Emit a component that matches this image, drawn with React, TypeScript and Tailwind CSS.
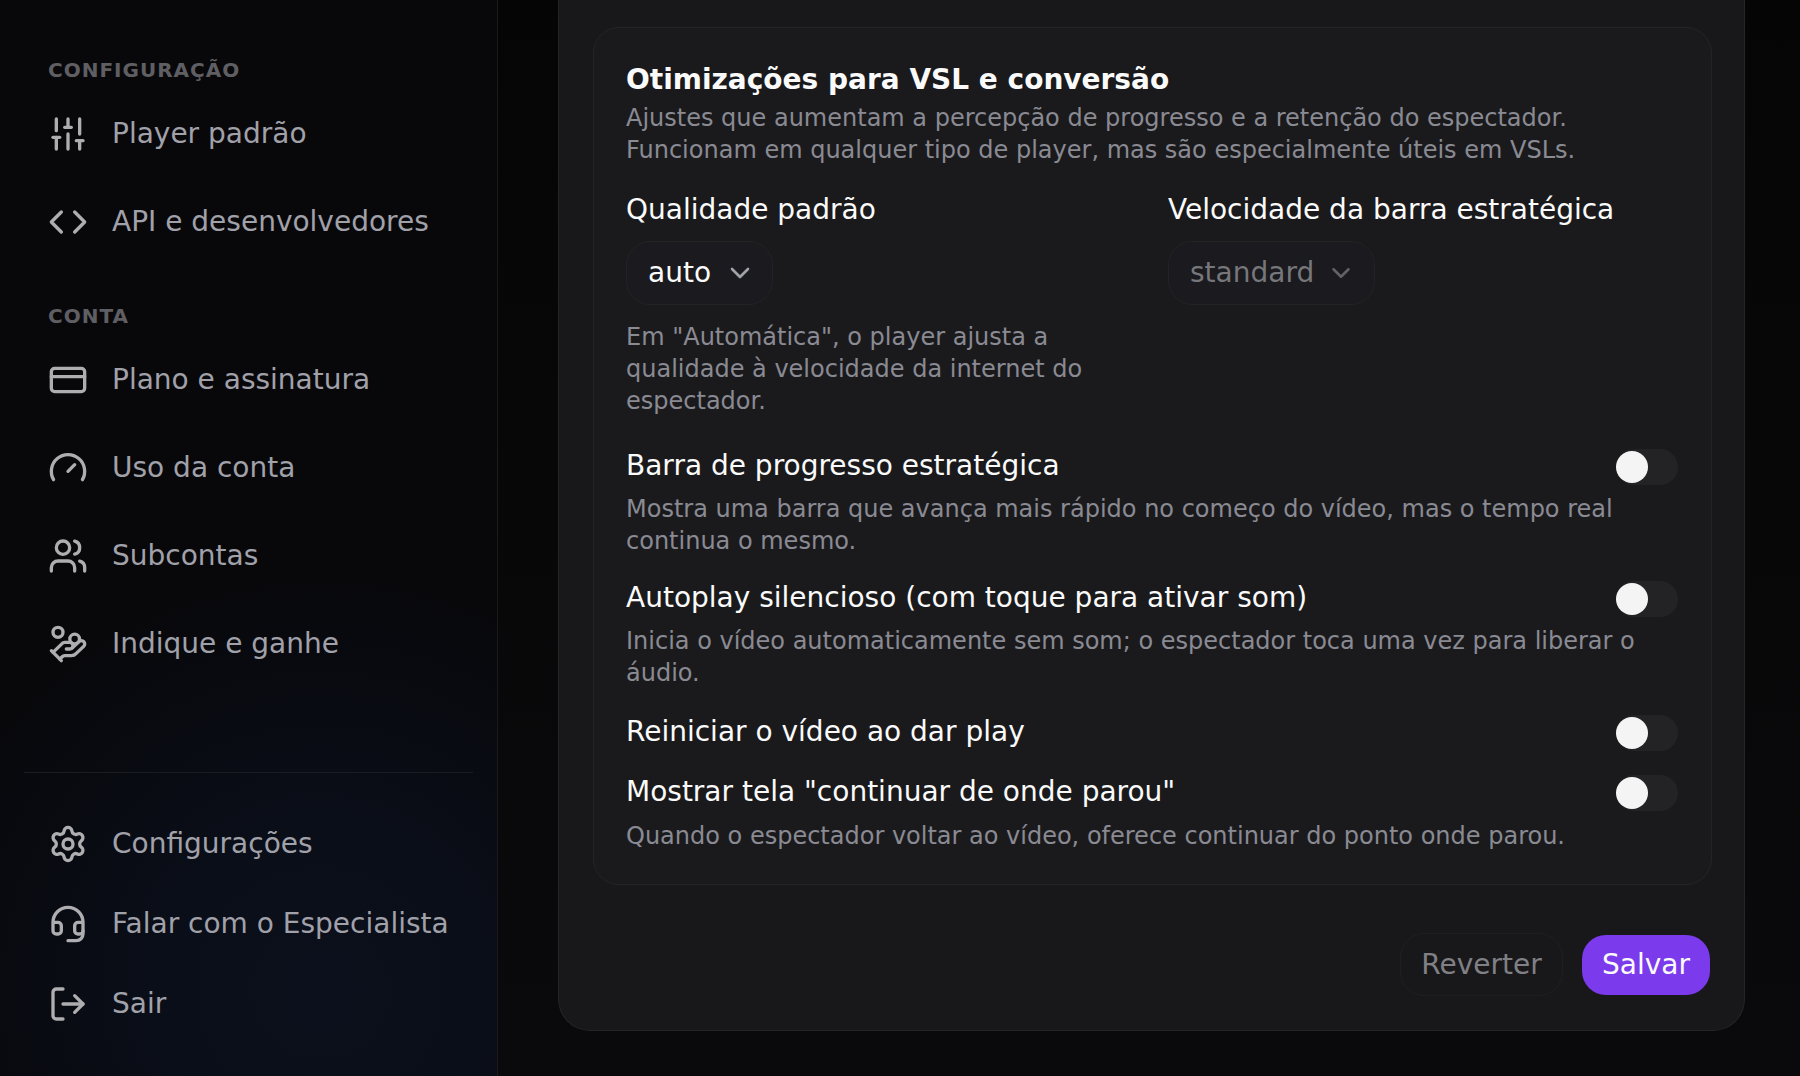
import React from 'react';
import { ChevronDown, Code, CreditCard, Gauge, HandCoins, Headset, LogOut, Settings, SlidersVertical, Users } from 'lucide-react';

const NavItem: React.FC<{ icon: React.ElementType; label: string; tall?: boolean }> = ({ icon: Icon, label, tall }) => (
  <div className={`flex items-center gap-[24px] text-[28px] text-[#a1a1aa] ${tall ? 'h-[88px]' : 'h-[80px]'}`}>
    <Icon className="size-[40px] shrink-0 text-[#aeaeb0]" />
    <span>{label}</span>
  </div>
);

const Toggle = () => (
  <div className="mt-[2px] flex h-[36px] w-[62px] shrink-0 items-center rounded-full bg-[#232325]">
    <div className="size-[32px] rounded-full bg-[#f4f4f5]" />
  </div>
);

const ToggleRow: React.FC<{ label: string; className: string }> = ({ label, className }) => (
  <div className={`flex h-[36px] items-center justify-between text-[28px] leading-[36px] text-[#fafafa] ${className}`}>
    <span>{label}</span>
    <Toggle />
  </div>
);

const Select: React.FC<{ value: string; disabled?: boolean }> = ({ value, disabled }) => (
  <div className={`flex h-[64px] w-fit items-center rounded-[24px] border border-[#232326] bg-[#1a1a1f] pl-[21px] text-[28px] ${disabled ? 'gap-[12px] pr-[18px] text-[#77777b]' : 'gap-[13px] pr-[16px] text-[#fafafa]'}`}>
    <span>{value}</span>
    <ChevronDown className={disabled ? 'size-[30px] text-[#636366]' : 'size-[32px] text-[#a1a1aa]'} />
  </div>
);

export default function App() {
  return (
    <div className="flex h-[1076px] overflow-hidden bg-[#070709] font-['DejaVu_Sans']">
      <aside className="flex h-full w-[498px] shrink-0 flex-col border-r border-[#1a1a1c] bg-[#08080b] bg-[radial-gradient(circle_at_320px_990px,#0b101c_0px,#0a0e18_170px,#090b12_280px,#08080b_420px)]">
        <div className="pl-[48px] pt-[59px]">
          <div className="-mt-[1px] h-[24px] text-[20px] font-bold leading-[24px] tracking-[1px] text-[#5f5f63]">CONFIGURAÇÃO</div>
          <div className="mt-[8px]">
            <NavItem icon={SlidersVertical} label="Player padrão" tall />
            <NavItem icon={Code} label="API e desenvolvedores" tall />
          </div>
          <div className="mt-[38px] h-[24px] text-[20px] font-bold leading-[24px] tracking-[1px] text-[#5f5f63]">CONTA</div>
          <div className="mt-[8px]">
            <NavItem icon={CreditCard} label="Plano e assinatura" tall />
            <NavItem icon={Gauge} label="Uso da conta" tall />
            <NavItem icon={Users} label="Subcontas" tall />
            <NavItem icon={HandCoins} label="Indique e ganhe" tall />
          </div>
        </div>
        <div className="mx-[24px] mt-auto mb-[32px] border-t border-[#1a1c22] pt-[31px] pl-[24px]">
          <NavItem icon={Settings} label="Configurações" />
          <NavItem icon={Headset} label="Falar com o Especialista" />
          <NavItem icon={LogOut} label="Sair" />
        </div>
      </aside>

      <main className="flex-1 bg-[linear-gradient(180deg,#050505,#0a0a0c)] pb-[45px] pl-[60px] pr-[55px]">
        <div className="flex h-full flex-col rounded-b-[32px] border border-t-0 border-[#252527] bg-[#18181b] pl-[34px] pr-[32px] pt-[27px]">
          <section className="rounded-[26px] border border-[#242427] bg-[#1a1a1d] pb-[32px] pl-[32px] pr-[33px] pt-[32px]">
            <h2 className="text-[28px] font-bold leading-[40px] text-[#fafafa]">Otimizações para VSL e conversão</h2>
            <p className="mt-[2px] text-[24px] leading-[32px] text-[#8a8a93]">
              Ajustes que aumentam a percepção de progresso e a retenção do espectador.
              <br />
              Funcionam em qualquer tipo de player, mas são especialmente úteis em VSLs.
            </p>
            <div className="mt-[26px] grid grid-cols-2 gap-x-[32px]">
              <div>
                <label className="block text-[28px] leading-[36px] text-[#fafafa]">Qualidade padrão</label>
                <div className="mt-[13px]">
                  <Select value="auto" />
                </div>
                <p className="mt-[16px] text-[24px] leading-[32px] text-[#8a8a93]">
                  Em "Automática", o player ajusta a qualidade à velocidade da internet do espectador.
                </p>
              </div>
              <div>
                <label className="block text-[28px] leading-[36px] text-[#fafafa]">Velocidade da barra estratégica</label>
                <div className="mt-[13px]">
                  <Select value="standard" disabled />
                </div>
              </div>
            </div>

            <ToggleRow label="Barra de progresso estratégica" className="mt-[31px]" />
            <p className="mt-[9px] text-[24px] leading-[32px] text-[#8a8a93]">
              Mostra uma barra que avança mais rápido no começo do vídeo, mas o tempo real continua o mesmo.
            </p>
            <ToggleRow label="Autoplay silencioso (com toque para ativar som)" className="mt-[23px]" />
            <p className="mt-[9px] text-[24px] leading-[32px] text-[#8a8a93]">
              Inicia o vídeo automaticamente sem som; o espectador toca uma vez para liberar o áudio.
            </p>
            <ToggleRow label="Reiniciar o vídeo ao dar play" className="mt-[25px]" />
            <ToggleRow label={'Mostrar tela "continuar de onde parou"'} className="mt-[24px]" />
            <p className="mt-[10px] text-[24px] leading-[32px] text-[#8a8a93]">
              Quando o espectador voltar ao vídeo, oferece continuar do ponto onde parou.
            </p>
          </section>

          <div className="mt-[48px] flex items-center justify-end gap-[19px] pr-[2px]">
            <button className="h-[63px] w-[163px] rounded-[24px] border border-[#1f1f21] text-[28px] text-[#808085]">Reverter</button>
            <button className="h-[60px] w-[128px] rounded-[24px] bg-[#7c3aed] text-[28px] text-[#fafafa]">Salvar</button>
          </div>
        </div>
      </main>
    </div>
  );
}
